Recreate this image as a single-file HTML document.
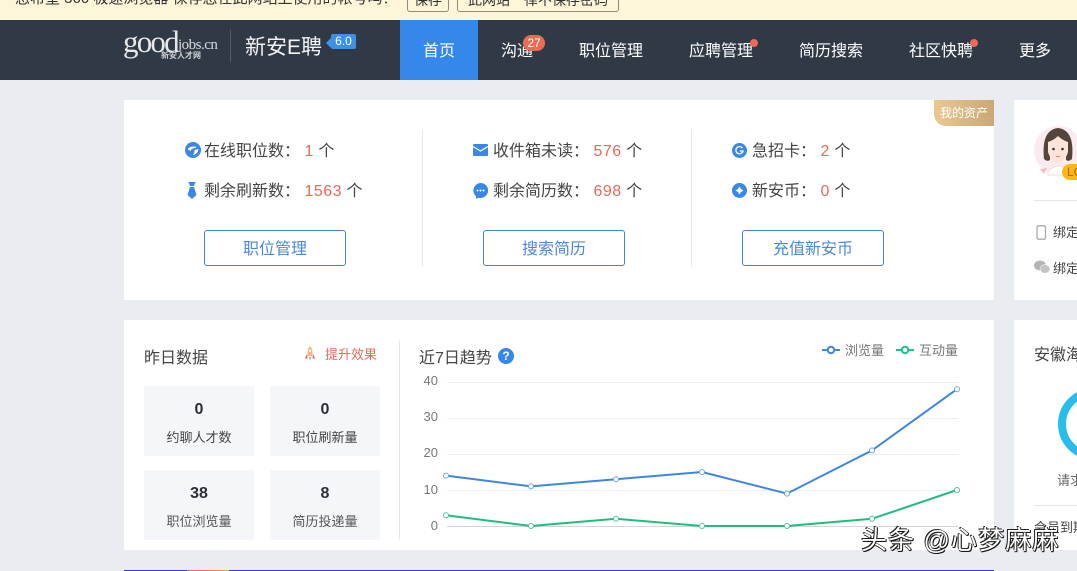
<!DOCTYPE html>
<html lang="zh"><head><meta charset="utf-8"><title>新安E聘</title>
<style>
html,body{margin:0;padding:0}
body{width:1077px;height:571px;overflow:hidden;position:relative;background:#e9edf1;font-family:"Liberation Sans","Noto Sans CJK SC",sans-serif;color:#444}
.a{position:absolute;white-space:nowrap}
.card{position:absolute;background:#fff}
.nav{position:absolute;top:20px;height:60px;line-height:64px;color:#fff;font-size:16px;white-space:nowrap}
.dot{position:absolute;width:8px;height:8px;border-radius:50%;background:#ee6a55}
.row{position:absolute;white-space:nowrap;font-size:16px;line-height:22px;color:#444}
.row b{font-weight:normal;color:#e8695b;letter-spacing:.5px}
.row i{font-style:normal;font-family:"Noto Sans CJK TC",sans-serif}
.btn{position:absolute;top:230px;width:140px;height:34px;border:1px solid #3d87d8;border-radius:3px;color:#4a88dc;font-size:16px;line-height:38px;text-align:center}
.vl{position:absolute;width:1px;background:#e8e8e8}
.st{position:absolute;width:110px;height:70px;background:#f4f6f9;text-align:center}
.st b{position:absolute;left:0;right:0;top:14px;font-size:16px;line-height:20px;color:#2e2e36}
.st span{position:absolute;left:0;right:0;top:42px;font-size:13px;line-height:20px;color:#555}
.ax{position:absolute;font-size:13px;line-height:16px;color:#777;text-align:right;width:20px;left:418px}
</style></head><body>

<div class="a" style="left:0;top:0;width:1077px;height:20px;background:#fff6d9;overflow:hidden">
 <div class="a" style="left:15px;top:-12px;font-size:15px;line-height:22px;color:#333">您希望 360 极速浏览器 保存您在此网站上使用的帐号吗？</div>
 <div class="a" style="left:407px;top:-10px;width:40px;height:20px;border:1px solid #8c8c84;border-radius:3px;font-size:14px;line-height:18px;text-align:center;color:#333">保存</div>
 <div class="a" style="left:457px;top:-10px;width:160px;height:20px;border:1px solid #8c8c84;border-radius:3px;font-size:14px;line-height:18px;text-align:center;color:#333">此网站一律不保存密码</div>
</div>

<div class="a" style="left:0;top:20px;width:1077px;height:60px;background:#2f3a46"></div>
<div class="a" style="left:123px;top:24px;font-family:'Liberation Serif',serif;font-size:31px;line-height:36px;color:#e6e8ea;letter-spacing:-1.800px">good</div>
<div class="a" style="left:178px;top:36px;font-family:'Liberation Serif',serif;font-size:15px;line-height:18px;color:#d8dadc;letter-spacing:-.5px">jobs.cn</div>
<div class="a" style="left:161px;top:50px;font-size:8px;line-height:12px;font-weight:bold;color:#cfd2d5">新安人才网</div>
<div class="a" style="left:230px;top:30px;width:1px;height:32px;background:#555f6a"></div>
<div class="a" style="left:245px;top:34px;font-size:21px;line-height:28px;color:#f2f3f4">新安E聘</div>
<div class="a" style="left:326px;top:38px;width:0;height:0;border:5px solid transparent;border-right-color:#3d96e6;border-left:0"></div>
<div class="a" style="left:331px;top:34px;width:25px;height:15px;background:#3d90e4;border-radius:2px;color:#fff;font-size:12px;line-height:15px;text-align:center">6.0</div>

<div class="a" style="left:400px;top:20px;width:78px;height:60px;background:#3388ea"></div>
<div class="nav" style="left:423px">首页</div>
<div class="nav" style="left:501px">沟通</div>
<div class="a" style="left:523px;top:35px;width:22px;height:16px;border-radius:9px;background:#ee6a55;color:#fff;font-size:12px;line-height:17px;text-align:center">27</div>
<div class="nav" style="left:579px">职位管理</div>
<div class="nav" style="left:689px">应聘管理</div>
<div class="dot" style="left:750px;top:39px"></div>
<div class="nav" style="left:799px">简历搜索</div>
<div class="nav" style="left:909px">社区快聘</div>
<div class="dot" style="left:970px;top:39px"></div>
<div class="nav" style="left:1019px">更多</div>

<!-- assets card -->
<div class="card" style="left:124px;top:100px;width:870px;height:200px"></div>
<div class="a" style="left:934px;top:100px;width:60px;height:26px;border-bottom-left-radius:12px;background:linear-gradient(90deg,#e9c98f,#c9a877);color:#fff;font-size:12px;line-height:26px;text-align:center">我的资产</div>

<svg class="a" style="left:185px;top:142px" width="16" height="16" viewBox="0 0 16 16"><circle cx="8" cy="8" r="8" fill="#3b88e4"/><path d="M2.500 7Q6 3.500 12 5L8 6.500Q6 7 5.500 9ZM13.500 7Q13 12 8 13Q10 10 9.500 8Z" fill="#fff"/></svg>
<div class="row" style="left:204px;top:138px">在线职位数<i>：</i> <b>1</b> 个</div>
<svg class="a" style="left:187px;top:182px" width="10" height="17" viewBox="0 0 10 17"><path d="M1.500 0H8.500L7 4H3ZM3 5H7L9.500 13 5 17 .5 13Z" fill="#3b88e4"/></svg>
<div class="row" style="left:204px;top:178px">剩余刷新数<i>：</i> <b>1563</b> 个</div>
<div class="btn" style="left:204px">职位管理</div>
<div class="vl" style="left:422px;top:130px;height:137px"></div>

<svg class="a" style="left:473px;top:144px" width="15" height="12" viewBox="0 0 15 12"><rect width="15" height="12" rx="1" fill="#3b88e4"/><path d="M0 2.500 7.500 7 15 2.500" fill="none" stroke="#fff" stroke-width="1.300"/></svg>
<div class="row" style="left:493px;top:138px">收件箱未读<i>：</i> <b>576</b> 个</div>
<svg class="a" style="left:473px;top:183px" width="15" height="16" viewBox="0 0 15 16"><path d="M7.500 0a7.500 7.500 0 1 1-2 14.700L3 16v-2.800A7.500 7.500 0 0 1 7.500 0Z" fill="#3b88e4"/><circle cx="4.500" cy="7.500" r="1" fill="#fff"/><circle cx="7.500" cy="7.500" r="1" fill="#fff"/><circle cx="10.500" cy="7.500" r="1" fill="#fff"/></svg>
<div class="row" style="left:493px;top:178px">剩余简历数<i>：</i> <b>698</b> 个</div>
<div class="btn" style="left:483px">搜索简历</div>
<div class="vl" style="left:691px;top:130px;height:137px"></div>

<svg class="a" style="left:732px;top:143px" width="15" height="15" viewBox="0 0 15 15"><circle cx="7.500" cy="7.500" r="7.500" fill="#3b88e4"/><path d="M10.500 5.200A3.600 3.600 0 1 0 11 8H7.800" fill="none" stroke="#fff" stroke-width="1.300"/></svg>
<div class="row" style="left:752px;top:138px">急招卡<i>：</i> <b>2</b> 个</div>
<svg class="a" style="left:732px;top:183px" width="15" height="15" viewBox="0 0 15 15"><circle cx="7.500" cy="7.500" r="7.500" fill="#3b88e4"/><path d="M7.500 3.500 9 6 11.500 7.500 9 9 7.500 11.500 6 9 3.500 7.500 6 6Z" fill="#fff"/></svg>
<div class="row" style="left:752px;top:178px">新安币<i>：</i> <b>0</b> 个</div>
<div class="btn" style="left:742px">充值新安币</div>

<!-- profile card -->
<div class="card" style="left:1014px;top:100px;width:63px;height:200px"></div>
<svg class="a" style="left:1034px;top:125px" width="43" height="56" viewBox="0 0 43 56">
 <circle cx="24" cy="25" r="24" fill="#fbeaf0"/>
 <path d="M10 34Q7 5 24 3Q41 5 38 34Q35 37 32 35V18H16V35Q13 37 10 34Z" fill="#54443a"/>
 <path d="M14 17Q20 15 24 11Q28 15 34 17V27Q31 37 24 38Q17 37 14 27Z" fill="#fde3d8"/>
 <path d="M14 46Q24 36 34 46V50H14Z" fill="#fff" stroke="#f8dcdc"/>
 <circle cx="19.500" cy="24" r="1.300" fill="#333"/><circle cx="28.500" cy="24" r="1.300" fill="#333"/>
 <path d="M22 31Q24 32.500 26 31" stroke="#d77" fill="none"/>
 <path d="M6 44l7-1-3 6Z" fill="#f6bcc3"/>
</svg>
<div class="a" style="left:1062px;top:164px;width:30px;height:16px;border-radius:8px;background:#fdb90f;color:#b4621a;font-size:12px;line-height:16px;padding-left:5px">LC</div>
<div class="a" style="left:1034px;top:200px;width:43px;height:1px;background:#e6e6e6"></div>
<svg class="a" style="left:1036px;top:225px" width="11" height="15" viewBox="0 0 11 15"><rect x="1" y=".8" width="8.500" height="13.400" rx="1.500" fill="#fff" stroke="#aaa" stroke-width="1.300"/></svg>
<div class="a" style="left:1053px;top:224px;font-size:13px;line-height:18px;color:#444">绑定手机</div>
<svg class="a" style="left:1034px;top:260px" width="16" height="14" viewBox="0 0 16 14"><ellipse cx="6" cy="5.500" rx="6" ry="5" fill="#b5b5b5"/><ellipse cx="11" cy="9" rx="5" ry="4.300" fill="#c4c4c4" stroke="#fff" stroke-width=".6"/></svg>
<div class="a" style="left:1053px;top:260px;font-size:13px;line-height:18px;color:#444">绑定微信</div>

<!-- data card -->
<div class="card" style="left:124px;top:320px;width:870px;height:230px"></div>
<div class="a" style="left:144px;top:348px;font-size:16px;line-height:22px;color:#444">昨日数据</div>
<svg class="a" style="left:304px;top:345px" width="12" height="17" viewBox="0 0 12 17"><path d="M6 1Q9 4 8.500 11H3.500Q3 4 6 1Z" fill="#f3b48c"/><circle cx="6" cy="6" r="1.200" fill="#fff"/><path d="M3 9 .8 13.500H3.500ZM9 9 11.200 13.500H8.500Z" fill="#e8695b"/><path d="M5 12h2l-1 4Z" fill="#e8945b"/></svg>
<div class="a" style="left:325px;top:345px;font-size:13px;line-height:20px;color:#e8695b">提升效果</div>
<div class="st" style="left:144px;top:386px"><b>0</b><span style="color:#444">约聊人才数</span></div>
<div class="st" style="left:270px;top:386px"><b>0</b><span style="color:#444">职位刷新量</span></div>
<div class="st" style="left:144px;top:470px"><b>38</b><span>职位浏览量</span></div>
<div class="st" style="left:270px;top:470px"><b>8</b><span>简历投递量</span></div>
<div class="vl" style="left:399px;top:340px;height:200px"></div>

<div class="a" style="left:419px;top:348px;font-size:16px;line-height:22px;color:#444">近7日趋势</div>
<div class="a" style="left:498px;top:348px;width:16px;height:16px;border-radius:50%;background:#3388ea;color:#fff;font-size:12px;font-weight:bold;line-height:16px;text-align:center">?</div>

<svg class="a" style="left:820px;top:343px" width="145" height="14" viewBox="0 0 145 14">
 <path d="M2 7H20" stroke="#3f86de" stroke-width="2"/><circle cx="11" cy="7" r="3.200" fill="#fff" stroke="#3f86de" stroke-width="2"/>
 <path d="M76 7H94" stroke="#1fc08a" stroke-width="2"/><circle cx="85" cy="7" r="3.200" fill="#fff" stroke="#1fc08a" stroke-width="2"/>
</svg>
<div class="a" style="left:845px;top:342px;font-size:13px;line-height:18px;color:#777">浏览量</div>
<div class="a" style="left:919px;top:342px;font-size:13px;line-height:18px;color:#777">互动量</div>

<div class="ax" style="top:373px">40</div>
<div class="ax" style="top:409px">30</div>
<div class="ax" style="top:445px">20</div>
<div class="ax" style="top:482px">10</div>
<div class="ax" style="top:518px">0</div>

<svg class="a" style="left:440px;top:378px" width="525" height="155" viewBox="440 378 525 155">
 <g stroke="#edf0f3" stroke-width="1"><path d="M447 382.500H958M447 418.500H958M447 454.500H958M447 490.500H958"/></g>
 <path d="M447 526.500H958" stroke="#d4d4d4"/>
 <polyline fill="none" stroke="#3f86de" stroke-width="2" points="446,475.600 531,486.400 616,479.200 702,472 787,493.600 872,450.400 957,389.200"/>
 <polyline fill="none" stroke="#1fbd80" stroke-width="2" points="446,515.200 531,526 616,518.800 702,526 787,526 872,518.800 957,490"/>
 <g fill="#fff" stroke="#6ea6e8" stroke-width="1"><circle cx="446" cy="475.600" r="2.500"/><circle cx="531" cy="486.400" r="2.500"/><circle cx="616" cy="479.200" r="2.500"/><circle cx="702" cy="472" r="2.500"/><circle cx="787" cy="493.600" r="2.500"/><circle cx="872" cy="450.400" r="2.500"/><circle cx="957" cy="389.200" r="2.500"/></g>
 <g fill="#fff" stroke="#4cc795" stroke-width="1"><circle cx="446" cy="515.200" r="2.500"/><circle cx="531" cy="526" r="2.500"/><circle cx="616" cy="518.800" r="2.500"/><circle cx="702" cy="526" r="2.500"/><circle cx="787" cy="526" r="2.500"/><circle cx="872" cy="518.800" r="2.500"/><circle cx="957" cy="490" r="2.500"/></g>
</svg>

<!-- right lower card -->
<div class="card" style="left:1014px;top:320px;width:63px;height:230px"></div>
<div class="a" style="left:1034px;top:345px;font-size:16px;line-height:22px;color:#444">安徽海</div>
<div class="a" style="left:1058px;top:388px;width:56px;height:56px;border:8px solid #29bdee;border-radius:50%"></div>
<div class="a" style="left:1057px;top:472px;font-size:13px;line-height:18px;color:#666">请求</div>
<div class="a" style="left:1034px;top:505px;width:43px;height:1px;background:#e6e6e6"></div>
<div class="a" style="left:1034px;top:519px;font-size:13px;line-height:18px;color:#444">会员到期</div>

<!-- bottom strip -->
<div class="a" style="left:124px;top:570px;width:870px;height:1px;background:#3c35e6"></div>
<div class="a" style="left:187px;top:570px;width:42px;height:1px;background:linear-gradient(90deg,#f0556a,#f8a040)"></div>

<!-- watermark -->
<div class="a" style="left:861px;top:525px;font-size:26px;line-height:30px;color:#fff;letter-spacing:1.100px;text-shadow:-1px -1px 0 #222,1px 1px 0 #111,1px 0 0 #222,0 1px 0 #222">头条 @心梦麻麻</div>
</body></html>
